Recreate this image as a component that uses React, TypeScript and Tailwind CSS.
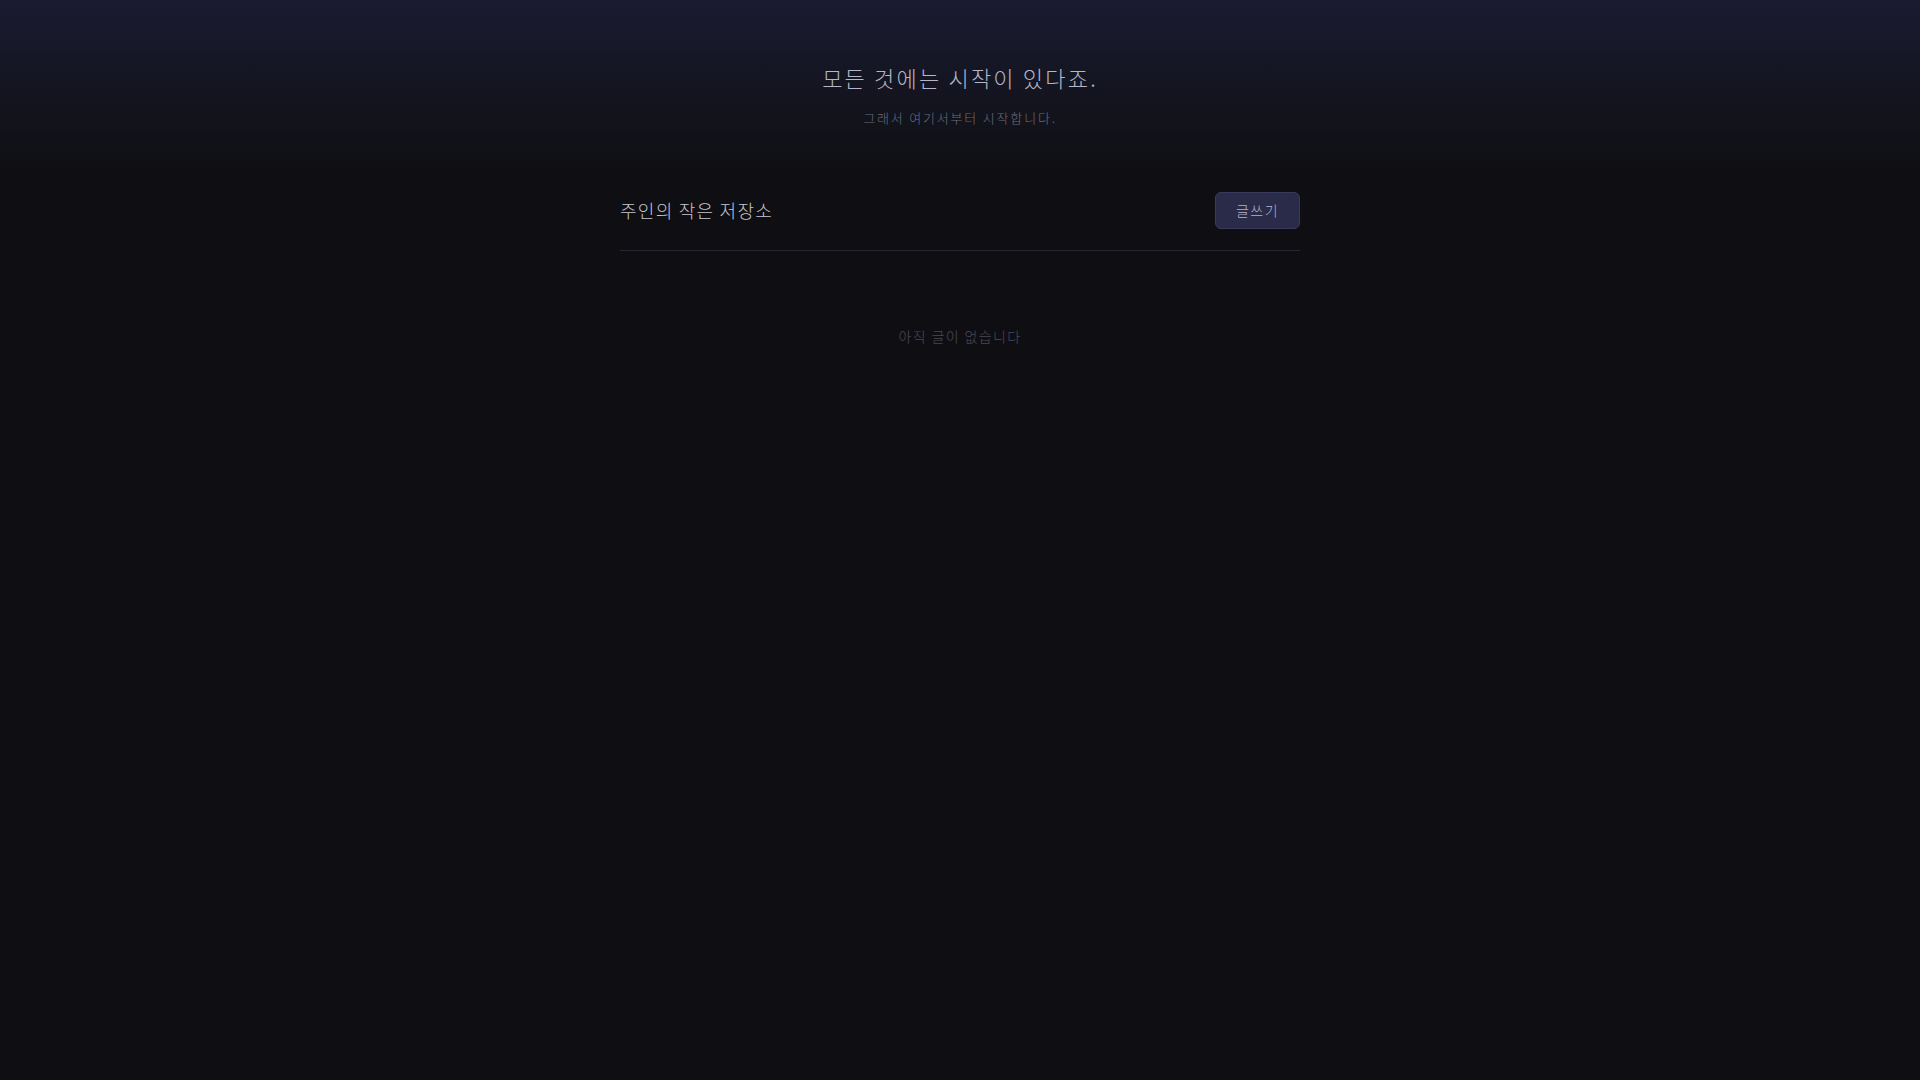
export default function App() {
    return (
        <div
            className="min-h-screen w-full bg-[#0f0f13] font-light"
            style={{ fontFamily: '"Noto Sans CJK KR", "Noto Sans", sans-serif' }}
        >
            {/* top hero with fading gradient */}
            <header className="bg-gradient-to-b from-[#1a1b30] to-[#0f0f13] h-[172px] flex flex-col items-center pt-[61px]">
                <h1 className="text-[22px] leading-[32px] text-[#b6b6c8] tracking-[0.1em]">
                    모든 것에는 시작이 있다죠.
                </h1>
                <p className="mt-[15px] text-[13px] leading-[20px] text-[#6c6c7e] tracking-[0.14em]">
                    그래서 여기서부터 시작합니다.
                </p>
            </header>

            <main className="mx-auto w-[680px] mt-[20px]">
                <div className="flex items-center justify-between pb-[21px] border-b border-[#26262f]">
                    <h2 className="text-[18px] leading-[28px] text-[#c6c6cf] tracking-[0.07em] -mt-[2px]">
                        주인의 작은 저장소
                    </h2>
                    <button className="h-[37px] w-[85px] rounded-md bg-[#2a2b48] border border-[#3a3b5c] text-[14px] text-[#b3b3cf] tracking-[0.1em]">
                        글쓰기
                    </button>
                </div>
                <div className="pt-[75px] text-center text-[14px] leading-[20px] text-[#4a4a58] tracking-[0.1em]">
                    아직 글이 없습니다
                </div>
            </main>
        </div>
    );
}
